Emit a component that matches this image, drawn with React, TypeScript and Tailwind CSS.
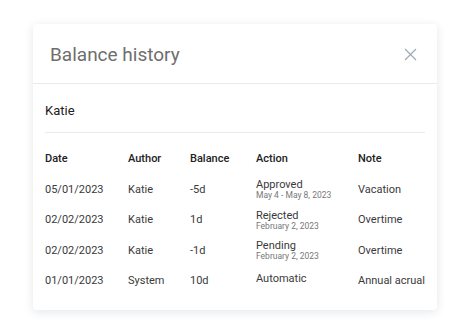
import React from "react";

const rows = [
  { date: "05/01/2023", author: "Katie", balance: "-5d", action: "Approved", sub: "May 4 - May 8, 2023", note: "Vacation" },
  { date: "02/02/2023", author: "Katie", balance: "1d", action: "Rejected", sub: "February 2, 2023", note: "Overtime" },
  { date: "02/02/2023", author: "Katie", balance: "-1d", action: "Pending", sub: "February 2, 2023", note: "Overtime" },
  { date: "01/01/2023", author: "System", balance: "10d", action: "Automatic", sub: "", note: "Annual acrual" },
];

export default function App() {
  return (
    <div className="w-[470px] h-[335px] bg-white pt-[24px] pl-[33px]" style={{ fontFamily: "Roboto, 'Liberation Sans', sans-serif" }}>
      <div className="w-[404px] h-[286px] bg-white rounded-[4px] shadow-[0_2px_10px_rgba(30,50,80,0.12)]">
        <div className="h-[60px] flex items-center justify-between pl-[17px] pr-[20px] pt-[2px] border-b border-[#e6ebf0]">
          <span className="text-[19px] text-[#6e6e6e] leading-none">Balance history</span>
          <svg width="13" height="13" viewBox="0 0 13 13">
            <path d="M1 1 L12 12 M12 1 L1 12" stroke="#9aa7b4" strokeWidth="1.1" fill="none" />
          </svg>
        </div>
        <div className="px-[12px]">
          <div className="h-[49px] flex items-center border-b border-[#e6ebf0] text-[13px] text-[#222] pt-[5px]">Katie</div>
          <div className="pt-[11px]">
            <div className="flex items-center h-[30.5px] text-[11px] font-medium text-[#222]">
              <div className="w-[83px]">Date</div>
              <div className="w-[62px]">Author</div>
              <div className="w-[66px]">Balance</div>
              <div className="w-[102px]">Action</div>
              <div>Note</div>
            </div>
            {rows.map((r, i) => (
              <div key={i} className="flex items-center h-[30.5px] text-[11px] text-[#3a3a3a]">
                <div className="w-[83px]">{r.date}</div>
                <div className="w-[62px]">{r.author}</div>
                <div className="w-[66px]">{r.balance}</div>
                <div className="w-[102px] flex flex-col leading-[11px]">
                  <span className={r.sub ? "" : "pb-[6px]"}>{r.action}</span>
                  {r.sub && <span className="text-[8.5px] text-[#777] leading-[10px]">{r.sub}</span>}
                </div>
                <div>{r.note}</div>
              </div>
            ))}
          </div>
        </div>
      </div>
    </div>
  );
}
